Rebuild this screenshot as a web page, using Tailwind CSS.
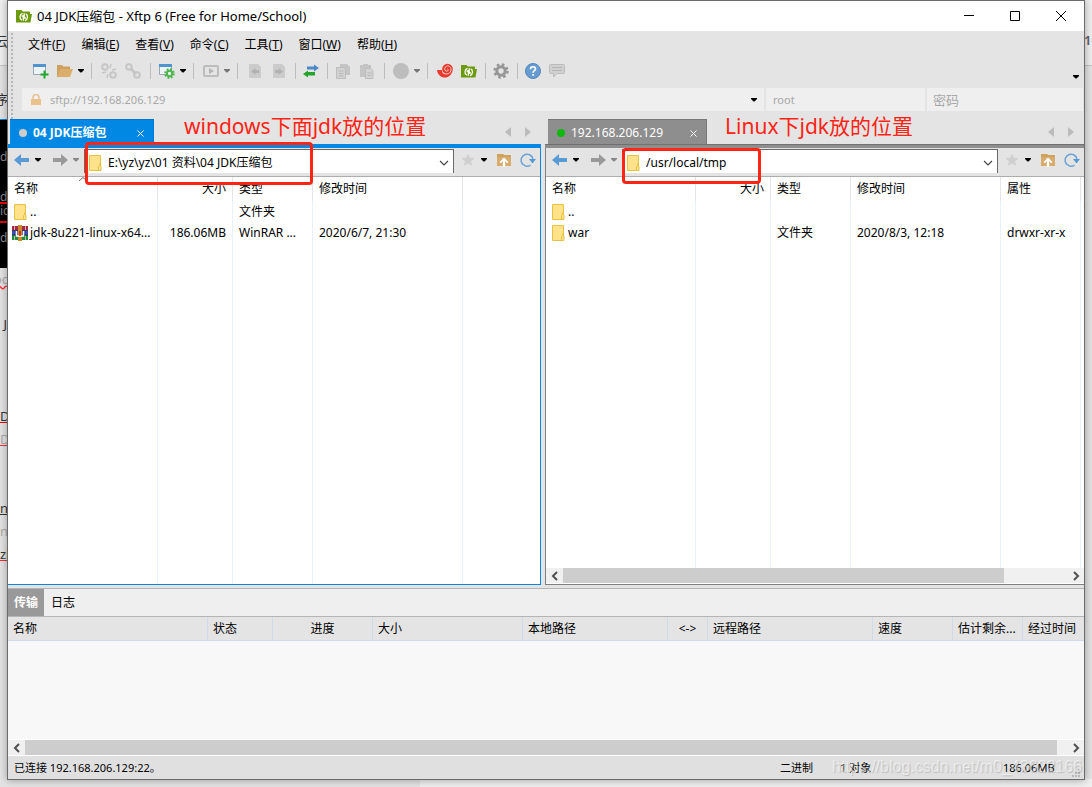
<!DOCTYPE html>
<html lang="zh-CN">
<head>
<meta charset="utf-8">
<title>04 JDK压缩包 - Xftp 6</title>
<script src="https://cdn.jsdelivr.net/npm/@tailwindcss/browser@4"></script>
</head>
<body class="relative h-screen overflow-hidden bg-[#e4e4e4] font-['Noto_Sans','Noto_Sans_CJK_SC',sans-serif] text-xs leading-4 text-black">

<svg class="hidden" aria-hidden="true">
  <symbol id="xftp" viewBox="0 0 16 14"><path d="M0 1h5.5l1.3 1.5H14V5h2l-1.6 8.5H0z" fill="#6b9a0b"/><path d="M6.500 4.300C3.300 5.500 3.300 10 5.800 11.200M5.500 7.200l1.800-.4v5M9 11.600C12.200 10.500 12.200 6 9.700 4.800M10 8.800l-1.800.4v-5" fill="none" stroke="#fff" stroke-width="1.300"/></symbol>
  <symbol id="down" viewBox="0 0 6 4"><path d="M0 0h6v1L3.5 3.5h-1L0 1z" fill="currentColor"/></symbol>
  <symbol id="back" viewBox="0 0 16 14"><path d="M7 1L0 7l7 6V9h8V5H7z" fill="currentColor"/></symbol>
  <symbol id="fwd" viewBox="0 0 16 14"><path d="M9 1l7 6-7 6V9H1V5h8z" fill="currentColor"/></symbol>
  <symbol id="folder" viewBox="0 0 16 16"><path d="M2.5.5h11v10.500h.500v4.500h-11.500z" fill="#ffe28a" stroke="#e8c244"/><path d="M11.500 15.500v-4l1-1v-2" fill="none" stroke="#e8c244"/></symbol>
  <symbol id="star" viewBox="0 0 14 14"><path d="M7 .5l1.900 4.200 4.600.5-3.400 3.100.9 4.600L7 10.600 3 12.900l.9-4.600L.5 5.200l4.600-.5z" fill="#cfcfcf"/></symbol>
  <symbol id="up" viewBox="0 0 14 14"><path d="M0 1h6l1 1h7v11H0z" fill="#cda15f"/><path d="M0 4h14v9H0z" fill="#d8ac6b"/><path d="M7 4.500l4.500 4.500-1.300 1.300-2-2V14H5.800V8.300l-2 2L2.500 9z" fill="#fff"/></symbol>
  <symbol id="refresh" viewBox="0 0 16 16"><path d="M10.500 13.200A6 6 0 1 1 13 7" fill="none" stroke="#6ca3d8" stroke-width="1.500"/><path d="M9 7h7l-3.500 4.500z" fill="#5b9bd5"/></symbol>
  <symbol id="window" viewBox="0 0 16 16"><path d="M.5 1.500h12v10H.5z" fill="#eef3f8" stroke="#9aa6b3"/><path d="M0 1h13v3H0z" fill="#4f93cf"/></symbol>
  <symbol id="cleft" viewBox="0 0 8 10"><path d="M6 1L2 5l4 4" fill="none" stroke="#505050" stroke-width="2"/></symbol>
  <symbol id="cright" viewBox="0 0 8 10"><path d="M2 1l4 4-4 4" fill="none" stroke="#505050" stroke-width="2"/></symbol>
  <symbol id="tleft" viewBox="0 0 6 10"><path d="M6 0v10L0 5z" fill="#bcbcbc"/></symbol>
  <symbol id="tright" viewBox="0 0 6 10"><path d="M0 0v10l6-5z" fill="#bcbcbc"/></symbol>
  <symbol id="cdown" viewBox="0 0 10 6"><path d="M1 1l4 4 4-4" fill="none" stroke="#444" stroke-width="1.200"/></symbol>
</svg>

<!-- Document that shows round the window's edges -->
<div class="absolute inset-0 overflow-hidden" aria-hidden="true">
  <div class="absolute inset-x-0 top-0 h-[66px] border-b border-[#c4c4c4] bg-[#f0f0f0]"></div>
  <div class="absolute left-0 top-[119px] h-[149px] w-2 overflow-hidden border-t border-[#0188e4] bg-black text-[#888]">
    <span class="absolute left-0 top-[29px]">da</span><span class="absolute left-0 top-[69px]">da</span>
    <span class="absolute inset-x-0 top-[82px] h-0.5 bg-red-600"></span>
    <span class="absolute left-0 top-[83px]">ic</span>
    <span class="absolute inset-x-0 top-[101px] h-0.5 bg-red-600"></span>
    <span class="absolute left-0 top-[110px]">da</span>
  </div>
  <div class="absolute left-0 top-0 h-full w-2 overflow-hidden text-[13px] text-[#333]">
    <span class="absolute right-0 top-[33px]">云</span>
    <span class="absolute right-0 top-[91px]">序</span>
    <span class="absolute right-0 top-[271px] text-[#aaa] underline decoration-red-500 decoration-wavy">oc</span>
    <span class="absolute right-px top-[316px]">J</span>
    <span class="absolute left-0 top-[408px] underline decoration-red-600">DK</span>
    <span class="absolute left-0 top-[431px] text-[#aaa] underline decoration-red-500">D.</span>
    <span class="absolute left-0 top-[500px] underline">no</span>
    <span class="absolute left-0 top-[523px] text-[#aaa]">no</span>
    <span class="absolute left-0 top-[546px] underline decoration-red-500">zl</span>
  </div>
  <span class="absolute left-[1084px] top-8 text-[13px] font-semibold text-[#5d6472]">10</span>
  <div class="absolute bottom-0 left-[420px] right-0 h-2 bg-[#efefef]"></div>
</div>

<main class="relative mx-[7px] flex h-[calc(100vh-7px)] flex-col border border-[#6b6b6b] bg-[#e4e4e4] shadow-[0_0_8px_rgba(0,0,0,0.35)]">
  <!-- Title bar -->
  <header class="flex h-[30px] shrink-0 items-center bg-white pl-2">
    <svg class="h-3.5 w-4"><use href="#xftp"/></svg>
    <h1 class="ml-[5px] flex-1 text-[13px]">04 JDK压缩包 - Xftp 6 (Free for Home/School)</h1>
    <button aria-label="最小化" class="flex w-[46px] justify-center"><svg class="size-2.5" viewBox="0 0 10 10"><path d="M0 4.500h10" stroke="#000"/></svg></button>
    <button aria-label="最大化" class="flex w-[46px] justify-center"><svg class="size-2.5" viewBox="0 0 10 10"><path d="M.5.5h9v9h-9z" fill="none" stroke="#000"/></svg></button>
    <button aria-label="关闭" class="flex w-[46px] justify-center"><svg class="size-2.5" viewBox="0 0 10 10"><path d="M0 0l10 10M10 0L0 10" stroke="#000"/></svg></button>
  </header>

  <div class="flex h-[88px] shrink-0">
    <div class="ml-[3px] mt-0.5 w-0.5 border-l-2 border-dotted border-[#b4b4b4]"></div>
    <div class="flex min-w-0 flex-1 flex-col">
      <!-- Menu -->
      <nav class="flex h-[27px] items-center gap-4 pl-[15px]">
        <button>文件(<u>F</u>)</button>
        <button>编辑(<u>E</u>)</button>
        <button>查看(<u>V</u>)</button>
        <button>命令(<u>C</u>)</button>
        <button>工具(<u>T</u>)</button>
        <button>窗口(<u>W</u>)</button>
        <button>帮助(<u>H</u>)</button>
      </nav>
      <!-- Toolbar -->
      <div class="flex h-[30px] items-center pl-4 pb-1">
        <button aria-label="新建" class="flex w-6 justify-center"><svg class="size-4" viewBox="0 0 16 16"><use href="#window"/><path d="M11.500 7.500v8M7.500 11.500h8" stroke="#1fa82c" stroke-width="2"/></svg></button>
        <button aria-label="打开" class="flex w-6 justify-center"><svg class="size-4" viewBox="0 0 16 16"><path d="M0 2h5l1.500 1.500H13V7H4L1 14H0z" fill="#cda15f"/><path d="M3.500 6H16l-3 8H.5z" fill="#dcae6c"/></svg></button>
        <button aria-label="打开选项" class="flex w-2 justify-center"><svg class="h-1 w-1.5"><use href="#down"/></svg></button>
        <span class="flex w-3 justify-center"><i class="h-4 w-px bg-[#bdbdbd]"></i></span>
        <button aria-label="断开" class="flex w-6 justify-center"><svg class="size-4" viewBox="0 0 16 16"><g fill="none" stroke="#c6c6c6" stroke-width="2"><circle cx="4" cy="4" r="2.800"/><circle cx="12" cy="12" r="2.800"/><path d="M10 1l-1 4M15 6l-4 1M1 10l4-1M6 15l1-4" stroke-width="1.500"/></g></svg></button>
        <button aria-label="连接" class="flex w-6 justify-center"><svg class="size-4" viewBox="0 0 16 16"><g fill="none" stroke="#c6c6c6" stroke-width="2"><circle cx="4" cy="4" r="2.800"/><circle cx="12" cy="12" r="2.800"/><path d="M5 5l6 6" stroke-width="3"/></g></svg></button>
        <span class="flex w-2.5 justify-center"><i class="h-4 w-px bg-[#bdbdbd]"></i></span>
        <button aria-label="属性" class="flex w-6 justify-center"><svg class="size-4" viewBox="0 0 16 16"><use href="#window"/><circle cx="10.500" cy="10.500" r="4.300" fill="none" stroke="#4cb648" stroke-width="2" stroke-dasharray="1.800 1.580"/><circle cx="10.500" cy="10.500" r="2.700" fill="#eef3f8" stroke="#4cb648" stroke-width="2"/></svg></button>
        <button aria-label="属性选项" class="flex w-2 justify-center"><svg class="h-1 w-1.5"><use href="#down"/></svg></button>
        <span class="flex w-3 justify-center"><i class="h-4 w-px bg-[#bdbdbd]"></i></span>
        <button aria-label="运行" class="flex w-6 justify-center"><svg class="size-4" viewBox="0 0 16 16"><rect x="1" y="3" width="14" height="10" rx="1" fill="none" stroke="#bcbcbc" stroke-width="2"/><path d="M6 5l5 3-5 3z" fill="#b4b4b4"/></svg></button>
        <button aria-label="运行选项" class="flex w-2 justify-center text-[#777]"><svg class="h-1 w-1.5"><use href="#down"/></svg></button>
        <span class="flex w-3 justify-center"><i class="h-4 w-px bg-[#bdbdbd]"></i></span>
        <button aria-label="下载" class="flex w-6 justify-center"><svg class="size-4" viewBox="0 0 16 16"><path d="M2 1h9l3 3v11H2z" fill="#cbcbcb"/><path d="M4 8.500L8.500 5v2H12v3H8.500v2z" fill="#b2b2b2"/></svg></button>
        <button aria-label="上传" class="flex w-6 justify-center"><svg class="size-4" viewBox="0 0 16 16"><path d="M2 1h9l3 3v11H2z" fill="#cbcbcb"/><path d="M12 8.500L7.500 5v2H4v3h3.500v2z" fill="#b2b2b2"/></svg></button>
        <span class="flex w-2 justify-center"><i class="h-4 w-px bg-[#bdbdbd]"></i></span>
        <button aria-label="同步" class="flex w-6 justify-center"><svg class="size-4" viewBox="0 0 16 16"><path d="M4 3.500h7V1.500l5 3.500-5 3.500v-2H4z" fill="#4b8ac9"/><path d="M12 9H5V7.500L0 11l5 3.500v-2h7z" fill="#27a22c"/></svg></button>
        <span class="flex w-2 justify-center"><i class="h-4 w-px bg-[#bdbdbd]"></i></span>
        <button aria-label="复制" class="flex w-6 justify-center"><svg class="size-4" viewBox="0 0 16 16"><path d="M5 1h7l3 3v8H5z" fill="#c4c4c4"/><path d="M1.500 4.500h7l2 2v9h-9z" fill="#d2d2d2" stroke="#bdbdbd"/><path d="M3.500 8h5M3.500 10.500h5M3.500 13h5" stroke="#b8b8b8"/></svg></button>
        <button aria-label="粘贴" class="flex w-6 justify-center"><svg class="size-4" viewBox="0 0 16 16"><path d="M1 2h3V1h5v1h3v12H1z" fill="#c4c4c4"/><path d="M6.500 5.500h5l2.500 2v8H6.500z" fill="#d4d4d4" stroke="#bdbdbd"/><path d="M8.500 10h4M8.500 12.500h4" stroke="#b8b8b8"/></svg></button>
        <span class="flex w-2.5 justify-center"><i class="h-4 w-px bg-[#bdbdbd]"></i></span>
        <button aria-label="编码" class="flex w-6 justify-center"><svg class="size-4" viewBox="0 0 16 16"><circle cx="8" cy="8" r="8" fill="#bdbdbd"/></svg></button>
        <button aria-label="编码选项" class="flex w-2 justify-center text-[#777]"><svg class="h-1 w-1.5"><use href="#down"/></svg></button>
        <span class="flex w-3 justify-center"><i class="h-4 w-px bg-[#bdbdbd]"></i></span>
        <button aria-label="Xshell" class="flex w-6 justify-center"><svg class="size-4" viewBox="0 0 16 16"><path d="M0 7h5c0 3 2 4 4 3.500 4 0 5-2 6.500-3C15 12 11 15 7 14.500 3 14 .5 11 0 7z" fill="#ea3a2d"/><circle cx="10.500" cy="6" r="5.300" fill="#ea3a2d"/><path d="M5.500 9.500c4 3 8.500 1 8.500-3 0-3-3-4.500-5-3s-1.500 4.500.7 4.700c1.500 0 2-1.700.8-2.200" fill="none" stroke="#fbe0dc" stroke-width=".9"/></svg></button>
        <button aria-label="Xftp" class="flex w-6 justify-center"><svg class="h-3.5 w-4"><use href="#xftp"/></svg></button>
        <span class="flex w-2 justify-center"><i class="h-4 w-px bg-[#bdbdbd]"></i></span>
        <button aria-label="选项" class="flex w-6 justify-center"><svg class="size-4" viewBox="0 0 16 16"><circle cx="8" cy="8" r="6.500" fill="none" stroke="#969696" stroke-width="2.400" stroke-dasharray="2.600 2.505"/><circle cx="8" cy="8" r="4.200" fill="none" stroke="#969696" stroke-width="3"/></svg></button>
        <span class="flex w-2 justify-center"><i class="h-4 w-px bg-[#bdbdbd]"></i></span>
        <button aria-label="帮助" class="flex w-6 justify-center"><svg class="size-4" viewBox="0 0 16 16"><circle cx="8" cy="8" r="7.500" fill="#659bd3" stroke="#5586bb"/><path d="M5.500 6.200c0-3.200 5-3.200 5-.3 0 1.900-2.400 1.700-2.400 3.800M8.100 11v1.800" fill="none" stroke="#fff" stroke-width="1.700"/></svg></button>
        <button aria-label="反馈" class="flex w-6 justify-center"><svg class="size-4" viewBox="0 0 16 16"><path d="M1.500 1.500h13a1 1 0 0 1 1 1v7a1 1 0 0 1-1 1H8L4.500 14v-3.500h-3a1 1 0 0 1-1-1v-7a1 1 0 0 1 1-1z" fill="#d0d0d0" stroke="#bcbcbc"/><path d="M3 4.500h10M3 7.500h10" stroke="#b4b4b4"/></svg></button>
        <button aria-label="工具栏选项" class="mr-[5px] mt-3 ml-auto"><svg class="h-1 w-1.5"><use href="#down"/></svg></button>
      </div>
      <!-- Address bar -->
      <form class="ml-[9px] mr-px flex h-[23px] gap-0.5 text-[11px] text-[#a8a8a8]">
        <div class="flex flex-1 items-center bg-[#efefef] pl-2 pr-[7px]">
          <svg class="h-3 w-3" viewBox="0 0 12 12"><path d="M3 6V3.500a3 3 0 0 1 6 0V6" fill="none" stroke="#e6c290" stroke-width="1.500"/><path d="M1 5h10v6H1z" fill="#e9c18a"/></svg>
          <input aria-label="地址" value="sftp://192.168.206.129" class="ml-2 min-w-0 flex-1 outline-none">
          <button type="button" aria-label="地址列表" class="text-black"><svg class="h-1 w-1.5"><use href="#down"/></svg></button>
        </div>
        <input aria-label="用户名" value="root" class="w-[159px] bg-[#efefef] px-[7px] outline-none">
        <input type="password" aria-label="密码" placeholder="密码" class="w-[156px] bg-[#efefef] px-1.5 text-[13px] outline-none placeholder:text-[#a8a8a8]">
      </form>
    </div>
  </div>

  <!-- Panes -->
  <div class="flex min-h-0 flex-1 gap-1">
    <section class="flex w-[533px] shrink-0 flex-col">
      <div class="flex h-[25px] shrink-0 items-end pl-0.5">
        <button class="flex h-[25px] w-36 shrink-0 items-center border-r border-t border-[#0078d7] bg-[#0188e4] px-[9px] pt-0.5 font-bold text-white"><i class="mr-1.5 size-2 rounded-full bg-[#ccc]"></i>04 JDK压缩包<svg class="ml-auto size-[7px]" viewBox="0 0 7 7"><path d="M.5.5l6 6M6.500.5l-6 6" stroke="#fff"/></svg></button>
        <p class="ml-[30px] h-9 whitespace-nowrap text-[21px] leading-9 text-[#ff2414]">windows下面jdk放的位置</p>
        <span class="mb-[7px] ml-auto mr-2.5 flex gap-3.5"><button aria-label="上一个标签"><svg class="h-2.5 w-1.5"><use href="#tleft"/></svg></button><button aria-label="下一个标签"><svg class="h-2.5 w-1.5"><use href="#tright"/></svg></button></span>
      </div>
      <div class="h-1 shrink-0 bg-[#0188e4]"></div>
      <div class="flex min-h-0 flex-1 flex-col border-b border-r border-[#0188e4]">
        <div class="flex h-[29px] shrink-0 items-center border-b border-[#adadad]">
          <button aria-label="后退" class="ml-0.5 mb-1 flex w-6 justify-center text-[#5b9bd5]"><svg class="h-3.5 w-4"><use href="#back"/></svg></button>
          <button aria-label="后退历史" class="mb-1 flex w-2 justify-center"><svg class="h-1 w-1.5"><use href="#down"/></svg></button>
          <button aria-label="前进" class="mb-1 ml-1.5 flex w-6 justify-center text-[#9a9a9a]"><svg class="h-3.5 w-4"><use href="#fwd"/></svg></button>
          <button aria-label="前进历史" class="mb-1 flex w-2 justify-center text-[#888]"><svg class="h-1 w-1.5"><use href="#down"/></svg></button>
          <div class="relative ml-1 mb-0.5 flex h-6 min-w-0 flex-1 items-center border border-b-0 border-[#696969] bg-white pl-0.5 pr-1 pt-0.5">
            <svg class="size-4"><use href="#folder"/></svg>
            <input aria-label="本地路径" value="E:\yz\yz\01 资料\04 JDK压缩包" class="ml-[5px] min-w-0 flex-1 outline-none">
            <button aria-label="本地路径列表"><svg class="h-1.5 w-2.5"><use href="#cdown"/></svg></button>
            <div class="pointer-events-none absolute left-0 -top-2 z-10 h-[43px] w-[228px] rounded-sm border-3 border-[#ff2414]"></div>
          </div>
          <button aria-label="收藏" class="mb-1 ml-0.5 flex w-6 justify-center"><svg class="size-3.5"><use href="#star"/></svg></button>
          <button aria-label="收藏列表" class="mb-1 flex w-2 justify-center"><svg class="h-1 w-1.5"><use href="#down"/></svg></button>
          <button aria-label="上级目录" class="mb-1 ml-1 flex w-6 justify-center"><svg class="size-3.5"><use href="#up"/></svg></button>
          <button aria-label="刷新" class="mb-1 flex w-6 justify-center"><svg class="size-4"><use href="#refresh"/></svg></button>
        </div>
        <div class="min-h-0 flex-1 bg-white">
          <table class="h-full w-full table-fixed border-separate border-spacing-0">
            <colgroup><col class="w-[150px]"><col class="w-[75px]"><col class="w-[80px]"><col class="w-[150px]"><col></colgroup>
            <thead><tr class="h-6 text-left [&>th]:border-r [&>th]:border-[#e5e5e5] [&>th]:px-1.5 [&>th]:font-normal [&>th:last-child]:border-0"><th class="relative">名称<svg class="absolute left-[71px] top-0 h-1 w-2" viewBox="0 0 8 4"><path d="M0 4l4-3.500L8 4" fill="none" stroke="#666"/></svg></th><th class="text-right">大小</th><th>类型</th><th>修改时间</th><th></th></tr></thead>
            <tbody class="[&_td]:truncate [&_td]:border-r [&_td]:border-[#e8f2fc] [&_td]:px-1.5 [&_td:first-child]:pl-1 [&_td:first-child]:pr-0 [&_td:last-child]:border-0">
              <tr class="h-[21px]"><td><div class="flex items-center gap-0.5"><svg class="size-4"><use href="#folder"/></svg>..</div></td><td></td><td>文件夹</td><td></td><td></td></tr>
              <tr class="h-[21px]"><td><div class="flex items-center gap-0.5"><svg class="size-4 shrink-0" viewBox="0 0 16 16"><path d="M0 1h16v4.500H0z" fill="#a32844"/><path d="M0 5.500h16V10H0z" fill="#3b4bb5"/><path d="M0 10h16v5H0z" fill="#1d8b3a"/><path d="M0 5.500h16M0 10h16" stroke="#222" stroke-width=".7"/><path d="M6 0h4v16H6z" fill="#c9892c"/><path d="M4.500 6v5h7V6" fill="none" stroke="#fff" stroke-width="1.500"/><path d="M7.200 6h1.600v5H7.200z" fill="#c22"/><path d="M2.500 1v4M13.500 1v4M2.500 11v4M13.500 11v4" stroke="#e9c9d0" stroke-width=".8"/></svg>jdk-8u221-linux-x64...</div></td><td class="text-right">186.06MB</td><td>WinRAR ...</td><td>2020/6/7, 21:30</td><td></td></tr>
              <tr><td></td><td></td><td></td><td></td><td></td></tr>
            </tbody>
          </table>
        </div>
      </div>
    </section>

    <section class="flex min-w-0 flex-1 flex-col">
      <div class="flex h-[25px] shrink-0 items-end pl-[3px]">
        <button class="flex h-[25px] w-[159px] shrink-0 items-center border-r border-t border-[#777] bg-[#8e8e8e] px-[9px] pt-0.5 text-white"><i class="mr-1.5 size-2 rounded-full bg-[#0db80d]"></i>192.168.206.129<svg class="ml-auto size-[7px]" viewBox="0 0 7 7"><path d="M.5.5l6 6M6.500.5l-6 6" stroke="#fff"/></svg></button>
        <p class="ml-[18px] h-9 whitespace-nowrap text-[21px] leading-9 text-[#ff2414]">Linux下jdk放的位置</p>
        <span class="mb-[7px] ml-auto mr-2.5 flex gap-3.5"><button aria-label="上一个标签"><svg class="h-2.5 w-1.5"><use href="#tleft"/></svg></button><button aria-label="下一个标签"><svg class="h-2.5 w-1.5"><use href="#tright"/></svg></button></span>
      </div>
      <div class="h-1 shrink-0 border-t border-[#707070] bg-[#8e8e8e]"></div>
      <div class="flex min-h-0 flex-1 flex-col border-b border-l border-[#808080]">
        <div class="flex h-[29px] shrink-0 items-center border-b border-[#adadad]">
          <button aria-label="后退" class="ml-0.5 mb-1 flex w-6 justify-center text-[#5b9bd5]"><svg class="h-3.5 w-4"><use href="#back"/></svg></button>
          <button aria-label="后退历史" class="mb-1 flex w-2 justify-center"><svg class="h-1 w-1.5"><use href="#down"/></svg></button>
          <button aria-label="前进" class="mb-1 ml-1.5 flex w-6 justify-center text-[#9a9a9a]"><svg class="h-3.5 w-4"><use href="#fwd"/></svg></button>
          <button aria-label="前进历史" class="mb-1 flex w-2 justify-center text-[#888]"><svg class="h-1 w-1.5"><use href="#down"/></svg></button>
          <div class="relative ml-1 mb-0.5 flex h-6 min-w-0 flex-1 items-center border border-b-0 border-[#696969] bg-white pl-0.5 pr-1 pt-0.5">
            <svg class="size-4"><use href="#folder"/></svg>
            <input aria-label="远程路径" value="/usr/local/tmp" class="ml-[5px] min-w-0 flex-1 outline-none">
            <button aria-label="远程路径列表"><svg class="h-1.5 w-2.5"><use href="#cdown"/></svg></button>
            <div class="pointer-events-none absolute -left-px -top-0.5 z-10 h-9 w-[139px] rounded-sm border-3 border-[#ff2414]"></div>
          </div>
          <button aria-label="收藏" class="mb-1 ml-0.5 flex w-6 justify-center"><svg class="size-3.5"><use href="#star"/></svg></button>
          <button aria-label="收藏列表" class="mb-1 flex w-2 justify-center"><svg class="h-1 w-1.5"><use href="#down"/></svg></button>
          <button aria-label="上级目录" class="mb-1 ml-1 flex w-6 justify-center"><svg class="size-3.5"><use href="#up"/></svg></button>
          <button aria-label="刷新" class="mb-1 flex w-6 justify-center"><svg class="size-4"><use href="#refresh"/></svg></button>
        </div>
        <div class="min-h-0 flex-1 bg-white">
          <table class="h-full w-full table-fixed border-separate border-spacing-0">
            <colgroup><col class="w-[150px]"><col class="w-[75px]"><col class="w-[80px]"><col class="w-[150px]"><col class="w-[80px]"><col></colgroup>
            <thead><tr class="h-6 text-left [&>th]:border-r [&>th]:border-[#e5e5e5] [&>th]:px-1.5 [&>th]:font-normal [&>th:last-child]:border-0 [&>th:last-child]:p-0"><th>名称</th><th class="text-right">大小</th><th>类型</th><th>修改时间</th><th>属性</th><th></th></tr></thead>
            <tbody class="[&_td]:truncate [&_td]:border-r [&_td]:border-[#e8f2fc] [&_td]:px-1.5 [&_td:first-child]:pl-1 [&_td:first-child]:pr-0 [&_td:last-child]:border-0 [&_td:last-child]:p-0">
              <tr class="h-[21px]"><td><div class="flex items-center gap-0.5"><svg class="size-4"><use href="#folder"/></svg>..</div></td><td></td><td></td><td></td><td></td><td></td></tr>
              <tr class="h-[21px]"><td><div class="flex items-center gap-0.5"><svg class="size-4"><use href="#folder"/></svg>war</div></td><td></td><td>文件夹</td><td>2020/8/3, 12:18</td><td>drwxr-xr-x</td><td></td></tr>
              <tr><td></td><td></td><td></td><td></td><td></td><td></td></tr>
            </tbody>
          </table>
        </div>
        <div class="flex h-4 shrink-0 items-stretch border-b border-white bg-[#f0f0f0]">
          <button aria-label="向左滚动" class="flex w-[17px] shrink-0 items-center justify-center"><svg class="h-2.5 w-2"><use href="#cleft"/></svg></button>
          <div class="flex-1"><div class="h-full w-[87.5%] bg-[#cdcdcd]"></div></div>
          <button aria-label="向右滚动" class="flex w-[17px] shrink-0 items-center justify-center"><svg class="h-2.5 w-2"><use href="#cright"/></svg></button>
        </div>
      </div>
    </section>
  </div>

  <!-- Transfer panel -->
  <section class="mt-[3px] shrink-0">
    <div class="flex h-[29px] border-y border-[#b5b5b5] bg-[#efefef]">
      <button class="w-9 bg-[#999] font-bold text-white">传输</button>
      <button class="px-[7px]">日志</button>
    </div>
    <div class="h-[122px] bg-[#f8f8f8]">
      <table class="w-full table-fixed border-separate border-spacing-0">
        <colgroup><col><col class="w-[65px]"><col class="w-[100px]"><col class="w-[150px]"><col class="w-[145px]"><col class="w-10"><col class="w-[165px]"><col class="w-20"><col class="w-[70px]"><col class="w-[61px]"></colgroup>
        <thead><tr class="h-6 bg-[#e4e4e4] text-left [&>th]:whitespace-nowrap [&>th]:border-b [&>th]:border-r [&>th]:border-[#d0dbea] [&>th]:px-[5px] [&>th]:font-normal [&>th:last-child]:border-r-0"><th>名称</th><th>状态</th><th class="text-center">进度</th><th>大小</th><th>本地路径</th><th class="text-center">&lt;-&gt;</th><th>远程路径</th><th>速度</th><th>估计剩余...</th><th>经过时间</th></tr></thead>
      </table>
    </div>
    <div class="flex h-[17px] items-stretch border-y border-white bg-[#f0f0f0]">
      <button aria-label="向左滚动" class="flex w-[17px] shrink-0 items-center justify-center"><svg class="h-2.5 w-2"><use href="#cleft"/></svg></button>
      <div class="flex-1"><div class="h-full w-[99%] bg-[#cdcdcd]"></div></div>
      <button aria-label="向右滚动" class="flex w-[17px] shrink-0 items-center justify-center"><svg class="h-2.5 w-2"><use href="#cright"/></svg></button>
    </div>
  </section>

  <!-- Status bar -->
  <footer class="relative flex h-[23px] shrink-0 items-center bg-[#e0e0e0] pl-1.5 text-[11px]">
    <span class="flex-1">已连接 192.168.206.129:22。</span>
    <span class="w-[60px]">二进制</span>
    <span class="w-[163px]">1 对象</span>
    <span class="w-[81px]">186.06MB</span>
    <svg class="absolute bottom-0.5 right-1 size-2" viewBox="0 0 8 8"><path d="M6 0h2v2H6zM3 3h2v2H3zM6 3h2v2H6zM0 6h2v2H0zM3 6h2v2H3zM6 6h2v2H6z" fill="#b8b8b8"/></svg>
    <span class="absolute -top-px right-0.5 whitespace-nowrap font-['Liberation_Sans',sans-serif] text-base leading-6 text-white/50 [text-shadow:1px_1px_1px_rgba(0,0,0,0.15)]">https://blog.csdn.net/m0_43622166</span>
  </footer>
</main>
</body>
</html>
